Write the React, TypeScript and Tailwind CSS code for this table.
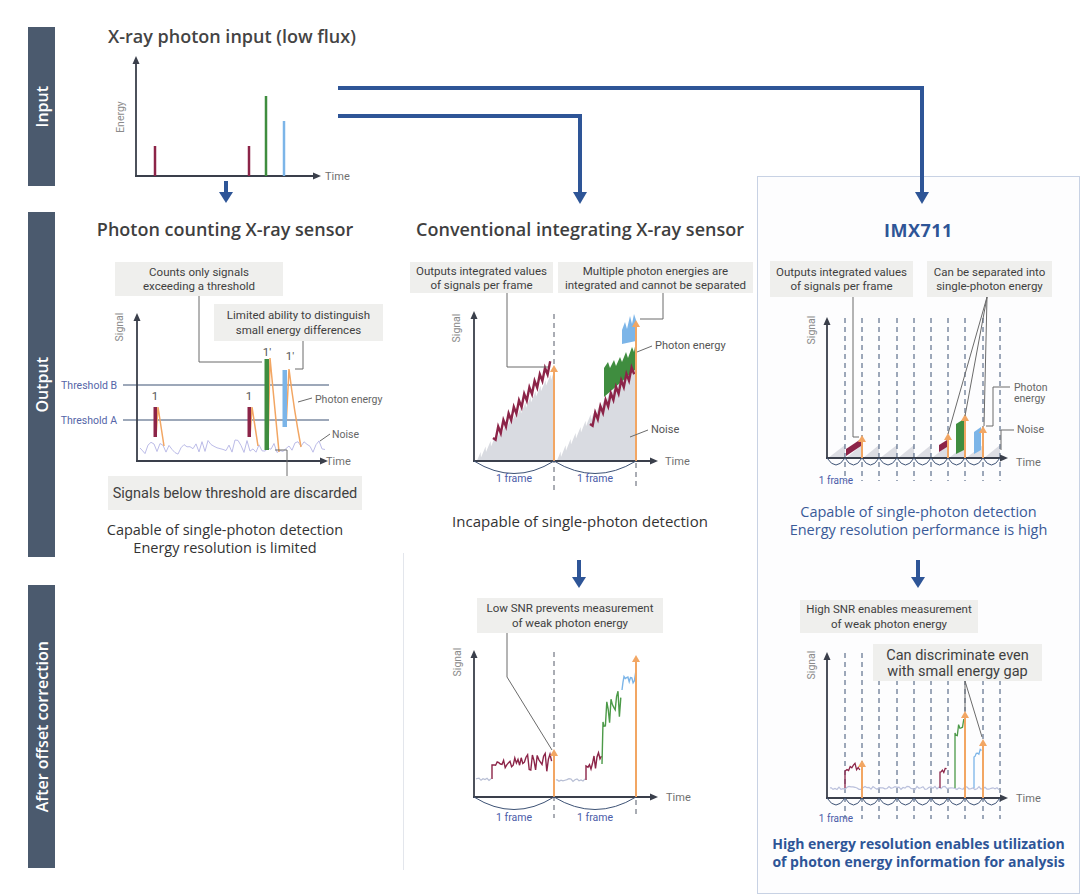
import React from "react";

const BLUE = "#2e5597";
const RED = "#8c2448";
const GREEN = "#3f8d3f";
const SKY = "#7cb5e8";
const ORANGE = "#f2a663";
const AXIS = "#3a3f4b";
const NAVY = "#3d5275";
const BOXBG = "#efefed";
const LEAD = "#6b6b6b";
const FONT = "Roboto, 'Open Sans', sans-serif";

function rng(seed: number) {
  let s = seed;
  return () => {
    s = (s * 9301 + 49297) % 233280;
    return s / 233280;
  };
}

// noisy segment, returns " L x y" pieces
function noise(x0: number, x1: number, y0: number, y1: number, a0: number, a1: number, step: number, seed: number) {
  const r = rng(seed);
  let d = "";
  for (let x = x0; x <= x1 + 0.01; x += step) {
    const t = (x - x0) / (x1 - x0 || 1);
    const y = y0 + (y1 - y0) * t;
    const a = a0 + (a1 - a0) * t;
    d += ` L${x.toFixed(1)} ${(y + (r() - 0.5) * 2 * a).toFixed(1)}`;
  }
  return d;
}

function zigzag(x0: number, y0: number, x1: number, y1: number, step: number, amp: number) {
  let d = `M${x0} ${y0}`;
  let i = 0;
  for (let x = x0 + step; x <= x1; x += step) {
    const y = y0 + ((y1 - y0) * (x - x0)) / (x1 - x0);
    d += ` L${x.toFixed(1)} ${(y + (i % 2 ? -amp : amp)).toFixed(1)}`;
    i++;
  }
  return d;
}

function saw(x0: number, y0: number, x1: number, y1: number, base: number) {
  const pts: string[] = [`${x0},${base}`];
  for (let x = x0; x < x1; x += 5) {
    const ya = y0 + ((y1 - y0) * (x - x0)) / (x1 - x0);
    const xb = Math.min(x + 4.6, x1);
    const yb = y0 + ((y1 - y0) * (xb - x0)) / (x1 - x0);
    pts.push(`${x},${(ya + 5).toFixed(1)}`, `${xb},${(yb - 1).toFixed(1)}`);
  }
  pts.push(`${x1},${base}`);
  return pts.join(" ");
}

function T({ x, y, children, size = 11.5, anchor = "middle", fill = "#3f3f3f", weight = 400 }: { x: number; y: number; children: React.ReactNode; size?: number; anchor?: "middle" | "start" | "end"; fill?: string; weight?: number }) {
  return (
    <text x={x} y={y} fontSize={size} textAnchor={anchor} fill={fill} fontWeight={weight} fontFamily={FONT}>
      {children}
    </text>
  );
}

function Callout({ x, y, w, h, lines, size = 11.5, gap = 14.5 }: { x: number; y: number; w: number; h: number; lines: string[]; size?: number; gap?: number }) {
  const cx = x + w / 2;
  const first = y + h / 2 - ((lines.length - 1) * gap) / 2 + size * 0.36;
  return (
    <g>
      <rect x={x} y={y} width={w} height={h} fill={BOXBG} />
      {lines.map((l, i) => (
        <T key={i} x={cx} y={first + i * gap} size={size}>
          {l}
        </T>
      ))}
    </g>
  );
}

function Axes({ ox, oy, top, right, label = "Signal", lx, ly, timeX, timeY }: { ox: number; oy: number; top: number; right: number; label?: string; lx: number; ly: number; timeX: number; timeY: number }) {
  return (
    <g>
      <path d={`M${ox} ${oy} V${top + 7} M${ox - 1} ${oy} H${right - 7}`} stroke={AXIS} strokeWidth={1.8} fill="none" />
      <polygon points={`${ox},${top} ${ox - 3.5},${top + 8} ${ox + 3.5},${top + 8}`} fill={AXIS} />
      <polygon points={`${right},${oy} ${right - 8},${oy - 3.5} ${right - 8},${oy + 3.5}`} fill={AXIS} />
      <text x={lx} y={ly} fontSize={10.5} fill="#8a8a8a" fontFamily={FONT} textAnchor="middle" transform={`rotate(-90 ${lx} ${ly})`}>
        {label}
      </text>
      <T x={timeX} y={timeY} size={11} anchor="start" fill="#707070">
        Time
      </T>
    </g>
  );
}

function OrangeUp({ x, y0, y1 }: { x: number; y0: number; y1: number }) {
  return (
    <g>
      <line x1={x} y1={y0} x2={x} y2={y1 + 4} stroke={ORANGE} strokeWidth={2} />
      <polygon points={`${x},${y1 - 2} ${x - 4},${y1 + 5} ${x + 4},${y1 + 5}`} fill={ORANGE} />
    </g>
  );
}

function DownArrow({ x, y0, y1 }: { x: number; y0: number; y1: number }) {
  return (
    <g>
      <line x1={x} y1={y0} x2={x} y2={y1 - 10} stroke={BLUE} strokeWidth={4} />
      <polygon points={`${x - 7},${y1 - 11} ${x + 7},${y1 - 11} ${x},${y1}`} fill={BLUE} />
    </g>
  );
}

const FRAMES3 = [827, 845, 862, 879, 897, 914, 931, 948, 965, 983, 1000];

function FrameArcs({ xs, y }: { xs: number[]; y: number }) {
  return (
    <g>
      {xs.slice(0, -1).map((a, i) => {
        const b = xs[i + 1];
        return <path key={i} d={`M${a} ${y} Q${(a + b) / 2} ${y + 14} ${b} ${y}`} stroke={NAVY} strokeWidth={1} fill="none" />;
      })}
    </g>
  );
}

function InputChart() {
  return (
    <svg width={348} height={157} viewBox="55 48 348 157" className="block">
      <Axes ox={136} oy={176} top={56} right={321} label="Energy" lx={124} ly={117} timeX={325} timeY={180} />
      <line x1={155} y1={146} x2={155} y2={176} stroke={RED} strokeWidth={2.5} />
      <line x1={249} y1={146} x2={249} y2={176} stroke={RED} strokeWidth={2.5} />
      <line x1={266} y1={96} x2={266} y2={176} stroke={GREEN} strokeWidth={2.5} />
      <line x1={284} y1={121} x2={284} y2={176} stroke={SKY} strokeWidth={2.5} />
      <DownArrow x={226} y0={181} y1={203} />
    </svg>
  );
}

function CountingChart() {
  const nz = "M140 448" + noise(142, 325, 448, 446, 7, 8, 3, 11);
  return (
    <svg width={348} height={275} viewBox="55 240 348 275" className="block">
      <path d={nz} stroke="#bcbce8" strokeWidth={1} fill="none" />
      <line x1={123} y1={385} x2={329} y2={385} stroke={NAVY} strokeWidth={1.2} />
      <line x1={123} y1={420} x2={329} y2={420} stroke={NAVY} strokeWidth={1.2} />
      <T x={117} y={388.5} size={10.5} anchor="end" fill="#5565a8">Threshold B</T>
      <T x={117} y={423.5} size={10.5} anchor="end" fill="#5565a8">Threshold A</T>
      <Axes ox={137} oy={461} top={313} right={328} lx={123} ly={327} timeX={326} timeY={465} />
      {/* orange tails */}
      <path d="M156 437 L158 407 Q160 420 164 446" stroke={ORANGE} strokeWidth={1.5} fill="none" />
      <path d="M250 437 L252 407 Q254 420 258 446" stroke={ORANGE} strokeWidth={1.5} fill="none" />
      <path d="M268 450 L270 358 Q274 400 279 452" stroke={ORANGE} strokeWidth={1.5} fill="none" />
      <path d="M286 427 L289 369 Q294 410 301 447" stroke={ORANGE} strokeWidth={1.5} fill="none" />
      <rect x={153.5} y={407} width={3.5} height={30} fill={RED} />
      <rect x={247.5} y={407} width={3.5} height={30} fill={RED} />
      <rect x={264.5} y={359} width={4.5} height={91} fill={GREEN} />
      <rect x={282.5} y={370} width={4.5} height={57} fill={SKY} />
      <T x={155} y={400} size={11.5} fill="#555">1</T>
      <T x={249} y={400} size={11.5} fill="#555">1</T>
      <T x={267} y={356} size={11.5} fill="#555">1′</T>
      <T x={290} y={360} size={11.5} fill="#555">1′</T>
      <path d="M298 402 L312 398" stroke={LEAD} strokeWidth={1} />
      <T x={315} y={403} size={10.5} anchor="start" fill="#666">Photon energy</T>
      <path d="M320 441 L330 434" stroke={LEAD} strokeWidth={1} />
      <T x={332} y={438} size={10.5} anchor="start" fill="#666">Noise</T>
      <Callout x={115} y={262} w={168} h={34} lines={["Counts only signals", "exceeding a threshold"]} />
      <Callout x={214} y={304} w={169} h={37} lines={["Limited ability to distinguish", "small energy differences"]} />
      <path d="M199 296 V362 H262" stroke={LEAD} strokeWidth={1} fill="none" />
      <path d="M303 341 V369 H295" stroke={LEAD} strokeWidth={1} fill="none" />
      <path d="M287 476 V450 H275" stroke={LEAD} strokeWidth={1} fill="none" />
      <Callout x={108} y={476} w={254} h={34} lines={["Signals below threshold are discarded"]} size={14.5} />
    </svg>
  );
}

function ConventionalChart() {
  return (
    <svg width={354} height={260} viewBox="403 240 354 260" className="block">
      <polygon points={saw(476, 458, 554, 372, 461)} fill="#d9dbe1" />
      <polygon points={saw(556, 458, 636, 360, 461)} fill="#d9dbe1" />
      <line x1={554} y1={314} x2={554} y2={490} stroke="#555b68" strokeWidth={1} strokeDasharray="5 4" />
      <line x1={636} y1={463} x2={636} y2={490} stroke="#555b68" strokeWidth={1} strokeDasharray="5 4" />
      <Axes ox={474} oy={461} top={311} right={658} lx={460} ly={328} timeX={665} timeY={465} />
      <path d={zigzag(493, 438, 552, 364, 2.6, 5)} stroke={RED} strokeWidth={2.4} fill="none" />
      <polygon points="604,397 604,368 608,362 610,368 614,360 616,366 620,357 622,362 626,352 628,358 632,347 634,352 636,341 636,369" fill={GREEN} />
      <polygon points="622,344 622,330 625,322 627,329 630,316 632,324 634,314 636,320 636,341" fill={SKY} />
      <path d={zigzag(590, 424, 636, 367, 2.6, 5)} stroke={RED} strokeWidth={2.4} fill="none" />
      <OrangeUp x={554} y0={461} y1={367} />
      <OrangeUp x={636} y0={461} y1={322} />
      <path d="M637 352 L652 346" stroke={LEAD} strokeWidth={1} />
      <T x={655} y={349} size={11} anchor="start" fill="#555">Photon energy</T>
      <path d="M630 437 L648 430" stroke={LEAD} strokeWidth={1} />
      <T x={651} y={433} size={11} anchor="start" fill="#555">Noise</T>
      <path d={`M474 461 Q514 486 554 461 Q595 486 636 461`} stroke={NAVY} strokeWidth={1} fill="none" />
      <T x={514} y={482} size={10.5} fill="#4a5ba8">1 frame</T>
      <T x={595} y={482} size={10.5} fill="#4a5ba8">1 frame</T>
      <Callout x={410} y={262} w={143} h={31} lines={["Outputs integrated values", "of signals per frame"]} gap={14} />
      <Callout x={558} y={262} w={195} h={31} lines={["Multiple photon energies are", "integrated and cannot be separated"]} gap={14} />
      <path d="M507 293 V367 H548" stroke={LEAD} strokeWidth={1} fill="none" />
      <path d="M663 293 V319 H640" stroke={LEAD} strokeWidth={1} fill="none" />
    </svg>
  );
}

function ConventionalCorrected() {
  const red1 = "M476 779" + noise(477, 491, 779, 779, 1.5, 1.5, 2, 3);
  const red2 = "M492 779 L492 765" + noise(494, 553, 765, 760, 3, 12, 1.6, 7);
  const g1 = "M556 780" + noise(557, 586, 780, 780, 1.5, 1.5, 2, 5);
  const r3 = "M586 780 L586 766" + noise(588, 602, 764, 760, 7, 10, 1.5, 13);
  const gr = "M602 764 L603 722" + noise(604, 622, 716, 700, 13, 17, 1.4, 17);
  const bl = "M622 690 L623 682" + noise(624, 636, 682, 676, 6, 6, 1.3, 21);
  return (
    <svg width={354} height={340} viewBox="403 531 354 340" className="block">
      <line x1={403.5} y1={553} x2={403.5} y2={870} stroke="#e3e6ec" strokeWidth={1} />
      <DownArrow x={579} y0={560} y1={588} />
      <line x1={554} y1={652} x2={554} y2={818} stroke="#555b68" strokeWidth={1} strokeDasharray="5 4" />
      <line x1={636} y1={800} x2={636} y2={818} stroke="#555b68" strokeWidth={1} strokeDasharray="5 4" />
      <Axes ox={474} oy={797} top={650} right={658} lx={461} ly={662} timeX={666} timeY={801} />
      <path d={red1} stroke="#b7bed4" strokeWidth={1.2} fill="none" />
      <path d={g1} stroke="#b7bed4" strokeWidth={1.2} fill="none" />
      <path d={red2} stroke={RED} strokeWidth={1.4} fill="none" />
      <path d={r3} stroke={RED} strokeWidth={1.4} fill="none" />
      <path d={gr} stroke="#4c9a48" strokeWidth={1.4} fill="none" />
      <path d={bl} stroke={SKY} strokeWidth={1.4} fill="none" />
      <OrangeUp x={554} y0={797} y1={751} />
      <OrangeUp x={636} y0={797} y1={657} />
      <path d={`M474 797 Q514 822 554 797 Q595 822 636 797`} stroke={NAVY} strokeWidth={1} fill="none" />
      <T x={514} y={821} size={10.5} fill="#4a5ba8">1 frame</T>
      <T x={595} y={821} size={10.5} fill="#4a5ba8">1 frame</T>
      <Callout x={477} y={598} w={186} h={35} lines={["Low SNR prevents measurement", "of weak photon energy"]} />
      <path d="M507 633 V677 L552 750" stroke={LEAD} strokeWidth={1} fill="none" />
    </svg>
  );
}

function ImxChart() {
  return (
    <svg width={320} height={254} viewBox="758 241 320 254" className="block">
      {FRAMES3.slice(0, -1).map((a, i) => (
        <polygon key={i} points={`${a + 1},458 ${FRAMES3[i + 1]},458 ${FRAMES3[i + 1]},445`} fill="#dcdde3" />
      ))}
      {FRAMES3.slice(1).map((x) => (
        <line key={x} x1={x} y1={318} x2={x} y2={481} stroke={NAVY} strokeWidth={1} strokeDasharray="5 4" />
      ))}
      <Axes ox={827} oy={458} top={317} right={1008} lx={815} ly={330} timeX={1016} timeY={466} />
      <FrameArcs xs={FRAMES3} y={458} />
      <polygon points="846,456 861,446 861,439 846,449" fill={RED} />
      <polygon points="939,452 947,447 947,440 939,445" fill={RED} />
      <polygon points="956,454 964,450 964,419 956,424" fill={GREEN} />
      <polygon points="974,454 981,450 981,427 974,432" fill={SKY} />
      <OrangeUp x={862} y0={458} y1={437} />
      <OrangeUp x={948} y0={458} y1={435} />
      <OrangeUp x={965} y0={458} y1={416} />
      <OrangeUp x={983} y0={458} y1={428} />
      <T x={836} y={484} size={10} fill="#4a5ba8">1 frame</T>
      <Callout x={770} y={261} w={143} h={36} lines={["Outputs integrated values", "of signals per frame"]} />
      <Callout x={927} y={261} w={125} h={36} lines={["Can be separated into", "single-photon energy"]} />
      <path d="M853 297 V437 H859" stroke={LEAD} strokeWidth={1} fill="none" />
      <path d="M987 297 L948 434 M987 297 L965 416 M987 297 L984 426" stroke={LEAD} strokeWidth={1} fill="none" />
      <path d="M986 426 H993 V387 H1010" stroke={LEAD} strokeWidth={1} fill="none" />
      <T x={1014} y={391} size={10.5} anchor="start" fill="#666">Photon</T>
      <T x={1014} y={402} size={10.5} anchor="start" fill="#666">energy</T>
      <path d="M1001 450 V430 H1014" stroke={LEAD} strokeWidth={1} fill="none" />
      <T x={1017} y={433} size={10.5} anchor="start" fill="#666">Noise</T>
    </svg>
  );
}

function ImxCorrected() {
  const base = "M830 788" + noise(831, 1000, 788, 788, 1.6, 1.6, 2, 29);
  const r1 = "M845 788 L845 771" + noise(847, 861, 770, 766, 4, 5, 1.6, 31);
  const r2 = "M940 788 L940 772" + noise(941, 947, 770, 765, 5, 5, 1.4, 37);
  const g = "M955 788 L955 733" + noise(956, 964, 731, 724, 6, 6, 1.3, 41);
  const b = "M974 788 L974 757" + noise(975, 982, 753, 748, 4, 4, 1.3, 43);
  return (
    <svg width={320} height={296} viewBox="758 539 320 296" className="block">
      <DownArrow x={918} y0={560} y1={588} />
      {FRAMES3.slice(1).map((x) => (
        <line key={x} x1={x} y1={653} x2={x} y2={819} stroke={NAVY} strokeWidth={1} strokeDasharray="5 4" />
      ))}
      <Axes ox={827} oy={798} top={652} right={1008} lx={815} ly={665} timeX={1016} timeY={802} />
      <path d={base} stroke="#bac0dc" strokeWidth={1.2} fill="none" />
      <path d={r1} stroke={RED} strokeWidth={1.3} fill="none" />
      <path d={r2} stroke={RED} strokeWidth={1.3} fill="none" />
      <path d={g} stroke="#4c9a48" strokeWidth={1.3} fill="none" />
      <path d={b} stroke={SKY} strokeWidth={1.3} fill="none" />
      <OrangeUp x={862} y0={798} y1={762} />
      <OrangeUp x={965} y0={798} y1={713} />
      <OrangeUp x={983} y0={798} y1={741} />
      <FrameArcs xs={FRAMES3} y={798} />
      <T x={836} y={822} size={10} fill="#4a5ba8">1 frame</T>
      <Callout x={800} y={600} w={178} h={33} lines={["High SNR enables measurement", "of weak photon energy"]} />
      <Callout x={873} y={644} w={169} h={37} lines={["Can discriminate even", "with small energy gap"]} size={14.5} gap={16} />
      <path d="M965 681 V711 M965 681 L982 737" stroke={LEAD} strokeWidth={1} fill="none" />
    </svg>
  );
}

function SideLabel({ text, h, mt }: { text: string; h: string; mt: string }) {
  return (
    <div className={`${h} ${mt} w-[27px] bg-[#4b5a6e] flex items-center justify-center`}>
      <span className="[writing-mode:vertical-rl] rotate-180 text-white text-[16px] font-semibold leading-none whitespace-nowrap">{text}</span>
    </div>
  );
}

export default function App() {
  return (
    <div className="relative w-[1080px] h-[896px] bg-white flex font-['Open_Sans',sans-serif] text-[#3f3f3f] overflow-hidden">
      <div className="w-[55px] pl-[28px] pt-[27px] flex flex-col shrink-0">
        <SideLabel text="Input" h="h-[159px]" mt="mt-0" />
        <SideLabel text="Output" h="h-[345px]" mt="mt-[26px]" />
        <SideLabel text="After offset correction" h="h-[283px]" mt="mt-[28px]" />
      </div>

      {/* column 1 */}
      <div className="w-[348px] shrink-0 flex flex-col">
        <div className="pt-[24px] pl-[53px] text-[18px] leading-[24px] font-semibold text-[#444] whitespace-nowrap">X-ray photon input (low flux)</div>
        <InputChart />
        <div className="pt-[13px] pr-[8px] text-center text-[18px] leading-[22px] font-semibold text-[#3f3f3f] whitespace-nowrap">Photon counting X-ray sensor</div>
        <CountingChart />
        <div className="mt-[6px] pr-[8px] text-center text-[14.5px] leading-[18px] text-[#333]">
          <div>Capable of single-photon detection</div>
          <div>Energy resolution is limited</div>
        </div>
      </div>

      {/* column 2 */}
      <div className="w-[354px] shrink-0 flex flex-col">
        <div className="pt-[218px] text-center text-[18px] leading-[22px] font-semibold text-[#3f3f3f] whitespace-nowrap">Conventional integrating X-ray sensor</div>
        <ConventionalChart />
        <div className="mt-[11px] text-center text-[15px] leading-[20px] text-[#333]">Incapable of single-photon detection</div>
        <ConventionalCorrected />
      </div>

      {/* column 3 */}
      <div className="w-[323px] shrink-0 mt-[176px] h-[718px] border border-[#c8d2e4] bg-[#fdfdfe] flex flex-col">
        <div className="pt-[42px] text-center text-[18px] leading-[22px] font-bold text-[#2e5597] tracking-[0.5px]">IMX711</div>
        <ImxChart />
        <div className="mt-[8px] text-center text-[14.5px] leading-[18px] text-[#3a5a98]">
          <div>Capable of single-photon detection</div>
          <div>Energy resolution performance is high</div>
        </div>
        <ImxCorrected />
        <div className="text-center text-[14px] leading-[18px] font-bold text-[#2e5597] whitespace-nowrap">
          <div>High energy resolution enables utilization</div>
          <div>of photon energy information for analysis</div>
        </div>
      </div>

      {/* routing arrows from the input */}
      <svg className="absolute inset-0 pointer-events-none" width={1080} height={896}>
        <path d="M338 88 H922 V193" stroke={BLUE} strokeWidth={4} fill="none" />
        <polygon points="915,192 929,192 922,204" fill={BLUE} />
        <path d="M338 116 H580 V193" stroke={BLUE} strokeWidth={4} fill="none" />
        <polygon points="573,192 587,192 580,204" fill={BLUE} />
      </svg>
    </div>
  );
}
